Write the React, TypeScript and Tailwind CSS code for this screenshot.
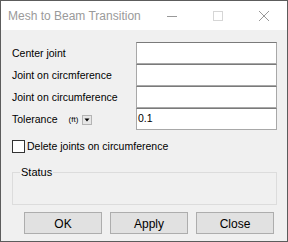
import { useState } from "react";

const fields = [
  { label: "Center joint", value: "" },
  { label: "Joint on circmference", value: "" },
  { label: "Joint on circumference", value: "" },
];

function TitleBar() {
  return (
    <div className="h-[29px] bg-white flex items-center shrink-0">
      <span className="pl-[7px] text-[12px] text-[#9a9a9a] flex-1">Mesh to Beam Transition</span>
      {/* caption buttons, 46px each */}
      <div className="flex h-full">
        <div className="w-[46px] h-full flex items-center justify-center">
          <svg width="10" height="10" viewBox="0 0 10 10">
            <path d="M0 5.5h10" stroke="#999999" strokeWidth="1" />
          </svg>
        </div>
        <div className="w-[46px] h-full flex items-center justify-center">
          <svg width="10" height="10" viewBox="0 0 10 10">
            <rect x="0.5" y="0.5" width="9" height="9" fill="none" stroke="#d6d6d6" strokeWidth="1" />
          </svg>
        </div>
        <div className="w-[46px] h-full flex items-center justify-center">
          <svg width="10" height="10" viewBox="0 0 10 10">
            <path d="M0 0L10 10M10 0L0 10" stroke="#999999" strokeWidth="1" />
          </svg>
        </div>
      </div>
    </div>
  );
}

function TextBox({ value }: { value: string }) {
  return (
    <div className="w-[141px] h-[22px] bg-white border border-[#a8a8a8] border-t-[#7a7a7a] flex items-center pl-[1px] text-[10.5px] text-black">
      {value}
    </div>
  );
}

export default function App() {
  const [remove, setRemove] = useState(false);

  return (
    <div
      className="w-[288px] h-[242px] border border-[#5c5c5c] bg-[#f0f0f0] flex flex-col"
      style={{ fontFamily: '"Liberation Sans", Arial, sans-serif' }}
    >
      <TitleBar />

      <div className="flex flex-col pl-[11px] pr-[10px] pt-[12px] text-[10.5px] text-black">
        {fields.map((f) => (
          <div key={f.label} className="flex items-center justify-between h-[22px]">
            <span className="pt-[2px]">{f.label}</span>
            <TextBox value={f.value} />
          </div>
        ))}
        <div className="flex items-center justify-between h-[22px]">
          <div className="flex items-center pt-[1px]">
            <span>Tolerance</span>
            <span className="ml-[11px] text-[8px]">(ft)</span>
            <div className="ml-[4px] w-[10px] h-[10px] bg-[#e6e6e6] border border-[#b4b4b4] flex items-center justify-center">
              <svg width="6" height="4" viewBox="0 0 6 4">
                <path d="M0.5 0.5h5L3 3.5z" fill="#000" />
              </svg>
            </div>
          </div>
          <TextBox value="0.1" />
        </div>

        <label className="mt-[10px] flex items-center h-[13px] cursor-default">
          <span
            onClick={() => setRemove((r) => !r)}
            className="w-[13px] h-[13px] bg-white border border-[#333333] shrink-0 flex items-center justify-center"
          >
            {remove && (
              <svg width="9" height="9" viewBox="0 0 9 9">
                <path d="M1 4.5l2.5 2.5L8 1.5" fill="none" stroke="#000" strokeWidth="1.3" />
              </svg>
            )}
          </span>
          <span className="ml-[2px]">Delete joints on circumference</span>
        </label>

        <fieldset className="mt-[13px] h-[39px] border border-[#dcdcdc] w-[265px] px-0">
          <legend className="ml-[7px] px-[1px] leading-[12px] text-[11px]">Status</legend>
        </fieldset>

        <div className="mt-[7px] flex gap-[8px] pl-[12px]">
          {["OK", "Apply", "Close"].map((b) => (
            <button
              key={b}
              className="w-[78px] h-[22px] bg-[#e1e1e1] border border-[#adadad] text-[12px] text-black flex items-center justify-center pt-[1px]"
            >
              {b}
            </button>
          ))}
        </div>
      </div>
    </div>
  );
}
